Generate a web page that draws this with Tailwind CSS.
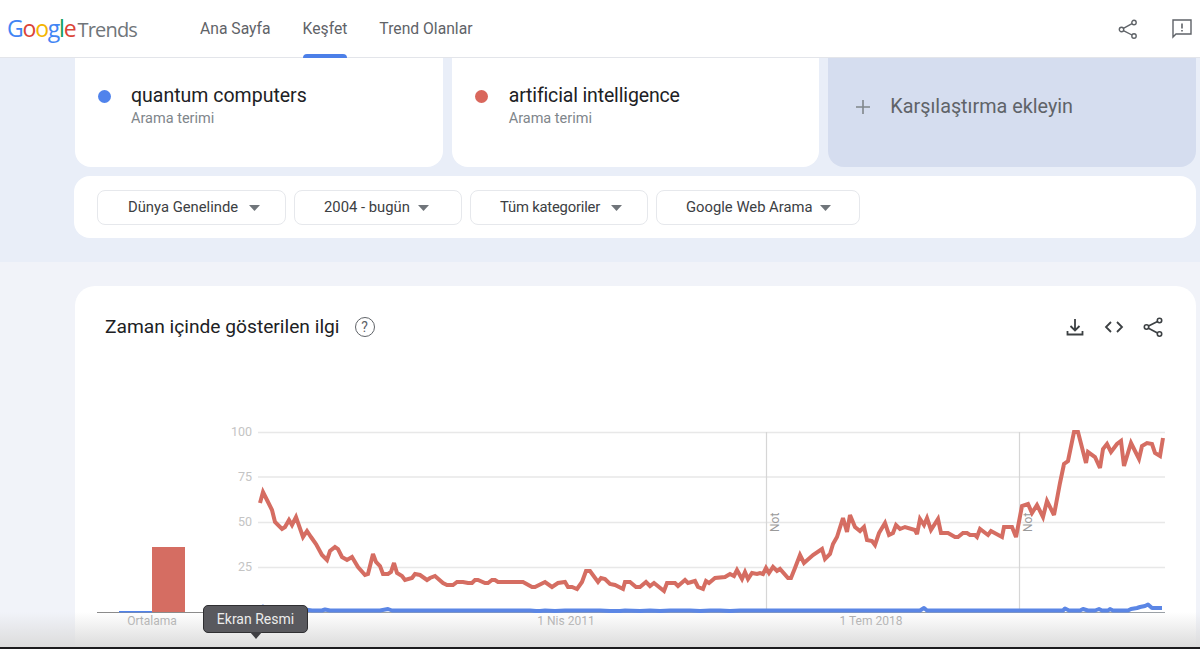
<!DOCTYPE html>
<html lang="tr">
<head>
<meta charset="UTF-8">
<title>Google Trends</title>
<script src="https://cdn.jsdelivr.net/npm/@tailwindcss/browser@4"></script>
</head>
<body class="relative h-[649px] w-[1200px] overflow-hidden bg-[#f1f3f9] font-['Roboto',sans-serif]">

  <!-- header -->
  <header class="flex h-[58px] items-center border-b border-[#e3e5ea] bg-white pl-[7px] pr-[8px]">
    <div class="flex w-[193px] items-baseline font-['Open_Sans',sans-serif] text-[23px] leading-none tracking-[-1.2px]">
      <span class="text-[#4285f4]">G</span><span class="text-[#db4437]">o</span><span class="text-[#f4b400]">o</span><span class="text-[#4285f4]">g</span><span class="text-[#0f9d58]">l</span><span class="mr-[2px] text-[#db4437]">e</span><span class="text-[20px] text-[#70757a] tracking-[-0.8px]">Trends</span>
    </div>
    <nav class="flex h-full gap-8 text-[15.7px] text-[#5f6368]">
      <a class="flex items-center">Ana Sayfa</a>
      <a class="relative flex items-center">Keşfet<span class="absolute bottom-[-1px] left-0 h-1 w-full rounded-t bg-[#4c7fe8]"></span></a>
      <a class="flex items-center">Trend Olanlar</a>
    </nav>
    <div class="ml-auto flex items-center gap-[34px]">
      <svg class="h-[20px] w-[20px]" viewBox="0 0 20 20" fill="none" stroke="#5f6368" stroke-width="1.4">
        <circle cx="16" cy="3.5" r="2.2"/><circle cx="3.5" cy="10.5" r="2.2"/><circle cx="16" cy="17" r="2.2"/>
        <path d="M5.4 9.4 14 4.6M5.4 11.6 14 16"/>
      </svg>
      <svg class="h-[20px] w-[20px]" viewBox="0 0 20 20" fill="none" stroke="#5f6368" stroke-width="1.4">
        <path d="M1 1h18v14H4l-3 3z"/>
        <path d="M10 4.5v5M10 11v1.5" stroke-width="1.6"/>
      </svg>
    </div>
  </header>

  <!-- search terms + filters -->
  <section class="h-[204px] bg-[#e9eef8] pl-[75px] pr-1">
    <div class="flex gap-[9px]">
      <div class="flex h-[109px] w-[368px] rounded-b-2xl bg-white pl-[23px] pt-[26px]">
        <span class="mr-[20px] mt-[6px] h-[13px] w-[13px] rounded-full bg-[#5083ec]"></span>
        <div>
          <p class="text-[19.5px] leading-[24px] text-[#202124]">quantum computers</p>
          <p class="mt-[1px] text-[14.5px] leading-[20px] text-[#80868b]">Arama terimi</p>
        </div>
      </div>
      <div class="flex h-[109px] w-[368px] rounded-b-2xl bg-white pl-[23px] pt-[26px]">
        <span class="mr-[21px] mt-[6px] h-[13px] w-[13px] rounded-full bg-[#d9675c]"></span>
        <div>
          <p class="text-[19.5px] leading-[24px] tracking-[-0.15px] text-[#202124]">artificial intelligence</p>
          <p class="mt-[1px] text-[14.5px] leading-[20px] text-[#80868b]">Arama terimi</p>
        </div>
      </div>
      <div class="flex h-[109px] w-[368px] items-center rounded-b-2xl bg-[#d5ddef] pb-[11px] pl-[27px] text-[#5f6368]">
        <svg class="mr-[19px] h-[16px] w-[16px]" viewBox="0 0 16 16" stroke="#80868b" stroke-width="1.6"><path d="M8 1v14M1 8h14"/></svg>
        <span class="text-[19.8px]">Karşılaştırma ekleyin</span>
      </div>
    </div>
    <div class="ml-[-1px] mt-[9px] flex h-[62px] w-[1122px] items-center gap-2 rounded-2xl bg-white pl-[23px] text-[14.8px] text-[#3c4043]">
      <button class="flex h-[35px] w-[189px] items-center gap-[11px] rounded-lg border border-[#e6e8ec] pl-[30px] pt-[1px]">Dünya Genelinde<svg class="h-[6px] w-[11px]" viewBox="0 0 11 6" fill="#70757a"><path d="M0 0h11L5.500 6z"/></svg></button>
      <button class="flex h-[35px] w-[168px] items-center gap-[8px] rounded-lg border border-[#e6e8ec] pl-[29px] pt-[1px]">2004 - bugün<svg class="h-[6px] w-[11px]" viewBox="0 0 11 6" fill="#70757a"><path d="M0 0h11L5.500 6z"/></svg></button>
      <button class="flex h-[35px] w-[178px] items-center gap-[11px] rounded-lg border border-[#e6e8ec] pl-[29px] pt-[1px] tracking-[-0.2px]">Tüm kategoriler<svg class="h-[6px] w-[11px]" viewBox="0 0 11 6" fill="#70757a"><path d="M0 0h11L5.500 6z"/></svg></button>
      <button class="flex h-[35px] w-[204px] items-center gap-[7px] rounded-lg border border-[#e6e8ec] pl-[29px] pt-[1px]">Google Web Arama<svg class="h-[6px] w-[11px]" viewBox="0 0 11 6" fill="#70757a"><path d="M0 0h11L5.500 6z"/></svg></button>
    </div>
  </section>

  <!-- interest over time -->
  <section class="ml-[75px] mt-6 h-[363px] w-[1121px] rounded-t-[20px] bg-white">
    <div class="flex h-[134px] items-start pl-[30px] pr-[33px] pt-[30px]">
      <h2 class="text-[19.2px] leading-[22px] text-[#202124]">Zaman içinde gösterilen ilgi</h2>
      <span class="ml-[15px] mt-[1px] flex h-[20px] w-[20px] items-center justify-center rounded-full border-[1.5px] border-[#5f6368] text-[14px] leading-none text-[#5f6368]">?</span>
      <div class="ml-auto mt-[1px] flex items-center gap-[19px]">
        <svg class="h-[20px] w-[20px]" viewBox="0 0 20 20" fill="none" stroke="#3c4043" stroke-width="1.8">
          <path d="M10 2v11M5.500 9l4.500 4.500L14.500 9M2.500 14v3.500h15V14"/>
        </svg>
        <svg class="h-[20px] w-[20px]" viewBox="0 0 20 20" fill="none" stroke="#3c4043" stroke-width="1.8">
          <path d="M7 5 2 10l5 5M13 5l5 5-5 5"/>
        </svg>
        <svg class="h-[20px] w-[20px]" viewBox="0 0 20 20" fill="none" stroke="#3c4043" stroke-width="1.6">
          <circle cx="16.500" cy="3.500" r="2.200"/><circle cx="3.500" cy="10" r="2.200"/><circle cx="16.500" cy="17" r="2.200"/>
          <path d="M5.500 9 14.500 4.500M5.500 11.200 14.500 16"/>
        </svg>
      </div>
    </div>
    <svg class="block h-[229px] w-[1121px]" viewBox="75 420 1121 229" font-family="Roboto, sans-serif">
      <g stroke="#e8e8e8" stroke-width="1.500">
        <path d="M258 432.500H1165M258 477H1165M258 522.500H1165M258 567.500H1165"/>
      </g>
      <g stroke="#d6d6d6" stroke-width="1.200">
        <path d="M766.500 432V612M1019.500 432V612"/>
      </g>
      <path d="M97 612.500H260" stroke="#8a8a8a" stroke-width="1"/>
      <path d="M258 612.500H1165" stroke="#9aa0a6" stroke-width="1"/>
      <g fill="#c4c4c4" font-size="12.500" text-anchor="end">
        <text x="252" y="436">100</text>
        <text x="252" y="481">75</text>
        <text x="252" y="526">50</text>
        <text x="252" y="571">25</text>
      </g>
      <rect x="119" y="611" width="33" height="1.500" fill="#5083ec"/>
      <rect x="152" y="547" width="33" height="65" fill="#d56d62"/>
      <g fill="#a8a8a8" font-size="12" text-anchor="middle">
        <text x="152" y="625">Ortalama</text>
        <text x="566" y="625">1 Nis 2011</text>
        <text x="871" y="625">1 Tem 2018</text>
      </g>
      <g fill="#9a9a9a" font-size="12" text-anchor="start">
        <text transform="translate(779 532) rotate(-90)">Not</text>
        <text transform="translate(1032 532) rotate(-90)">Not</text>
      </g>
      <polyline fill="none" stroke="#5b86e5" stroke-width="4" stroke-linejoin="round" points="258,610 261,610 263,606.500 266,610 300,610 305,609.500 312,610.500 322,610.500 325,609.500 330,610.500 380,610.500 388,609 392,610.500 530,610.500 536,611 540,611 545,610.500 555,611 565,610.500 600,610.500 610,611 620,611 625,610.500 640,611 650,610.500 660,611 670,610.500 690,610.500 700,611 710,610.500 720,610.500 730,611 740,610.500 770,610.500 920,610.500 924,608 927,610.500 1063,610.500 1065,608.500 1069,610.500 1080,610.500 1083,609 1088,610.500 1095,610.500 1099,609 1102,610.500 1108,610.500 1110,609 1113,610.500 1128,610.500 1131,609 1137,608 1140,607 1145,606 1148,604.500 1152,608 1162,608"/>
      <polyline fill="none" stroke="#d56d62" stroke-width="4" stroke-linejoin="miter" stroke-miterlimit="3" points="260,503 263,492 267,500 272,510 275,522 282,529 285,527 289,520 292,525 296,517 303,537 307,531 311,537 316,544 322,555 327,560 330,551 335,547 338,549 342,557 347,560 352,557 358,567 365,575 368,574 373,554 376,562 380,566 383,574 388,574 391,572 394,563 397,573 402,576 405,580 412,578 415,574 420,575 427,580 430,578 435,576 443,583 447,585 453,585 457,582 463,582 468,583 472,583 475,580 478,580 485,583 488,583 492,580 495,580 498,582 523,582 532,587 535,587 545,582 552,587 558,583 565,582 568,587 572,587 577,589 582,582 586,571 590,571 598,582 601,578 605,579 610,584 615,585 623,589 625,582 630,582 636,587 640,587 646,582 650,586 654,583 664,591 667,583 675,583 678,586 685,580 688,583 695,581 698,587 703,589 706,581 709,583 715,578 725,577 730,574 734,576 737,570 742,579 745,572 748,579 752,573 757,574 760,573 763,574 766,568 769,573 773,567 777,571 780,569 788,578 791,578 795,568 800,555 804,563 813,555 822,549 825,559 830,554 833,544 837,537 843,518 847,532 850,515 855,527 860,531 864,527 867,540 872,541 875,545 879,533 885,523 889,535 893,533 896,525 900,529 905,527 915,530 917,534 920,519 924,525 927,518 931,530 938,519 941,533 948,533 955,537 958,537 963,533 967,533 970,535 975,535 977,537 980,529 988,535 991,531 1002,537 1004,527 1012,527 1016,537 1022,506 1028,504 1032,513 1037,505 1043,517 1047,501 1054,515 1060,483 1064,464 1068,461 1074,432 1078,432 1086,463 1088,452 1095,457 1100,468 1103,449 1107,444 1111,452 1117,444 1121,441 1124,466 1131,443 1139,459 1142,446 1147,443 1152,444 1155,453 1160,456 1163,438"/>
    </svg>
  </section>

  <!-- macOS dock shadow and tooltip lying over the page -->
  <div class="pointer-events-none absolute inset-x-0 bottom-0 h-[37px] border-b-2 border-[#1c1c1e] bg-gradient-to-b from-white/0 to-[#dcdcdc]"></div>
  <div class="absolute left-[203px] top-[605px] flex h-[28px] w-[105px] items-center justify-center rounded-[5px] border border-[#2f2f32] bg-[#59595e] text-[14px] text-[#ececec]">
    Ekran Resmi
    <span class="absolute left-[46px] top-[26px] h-0 w-0 border-x-[6px] border-t-[7px] border-x-transparent border-t-[#3f3f43]"></span>
  </div>
</body>
</html>
